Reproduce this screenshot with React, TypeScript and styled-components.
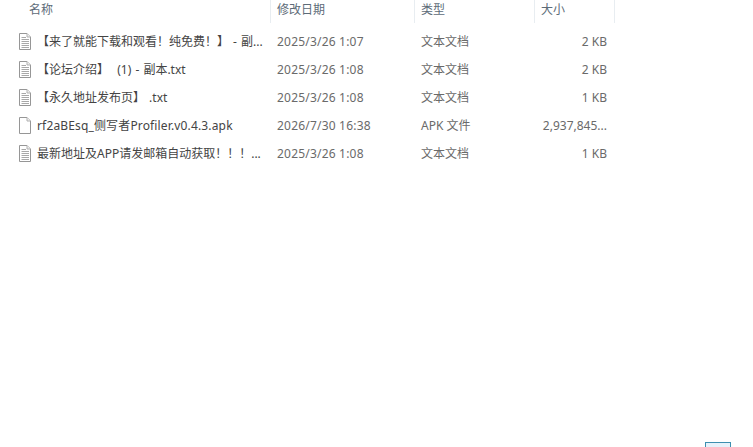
import React from "react";
import styled, { createGlobalStyle } from "styled-components";

const Global = createGlobalStyle`
  html, body { margin: 0; padding: 0; background: #fff; overflow: hidden; }
  body { font-family: "Noto Sans", "Noto Sans CJK SC", sans-serif; }
`;

const Page = styled.div`
  position: relative;
  width: 753px;
  height: 447px;
  overflow: hidden;
  background: #fff;
`;

const Columns = "271px 144px 120px 80px";

const Header = styled.div`
  display: grid;
  grid-template-columns: ${Columns};
  height: 23px;
`;

const HeaderCell = styled.div<{ $first?: boolean }>`
  box-sizing: border-box;
  border-right: 1px solid #e8edf1;
  padding: 0 0 5px ${(p) => (p.$first ? "29px" : "6px")};
  display: flex;
  align-items: center;
  font-size: 12px;
  color: #5d6b78;
`;

const List = styled.div`
  padding-top: 4px;
`;

const Row = styled.div`
  display: grid;
  grid-template-columns: ${Columns};
  height: 28px;
  align-items: center;
  font-size: 12px;
  color: #4c4c4c;
`;

const NameCell = styled.div`
  display: flex;
  align-items: center;
  padding-left: 19px;
  min-width: 0;
`;

const IconWrap = styled.svg`
  flex: none;
  width: 14px;
  height: 17px;
`;

const Name = styled.span<{ $wide?: boolean }>`
  margin-left: 4px;
  width: 226px;
  white-space: nowrap;
  overflow: hidden;
  color: #444;
  word-spacing: 1px;
  letter-spacing: ${(p) => (p.$wide ? "0.15px" : "0")};
`;

const DateCell = styled.div`
  padding-left: 6px;
  white-space: nowrap;
  color: #6a6a6a;
  letter-spacing: 0.2px;
`;

const TypeCell = styled.div`
  padding-left: 6px;
  white-space: nowrap;
  color: #6a6a6a;
`;

const SizeCell = styled.div`
  padding-right: 8px;
  text-align: right;
  white-space: nowrap;
  color: #6a6a6a;
`;

const ViewToggle = styled.div`
  position: absolute;
  left: 705px;
  top: 442px;
  width: 26px;
  height: 10px;
  box-sizing: border-box;
  border: 1px solid #3d8fb0;
  background: #e6f2fb;
`;

const FileIcon = ({ lines }: { lines: boolean }) => (
  <IconWrap viewBox="0 0 14 17" aria-hidden="true">
    <path d="M0.5 0.5H8L11.5 4V16.5H0.5Z" fill="#fff" stroke="#969696" />
    <path d="M8 0.5V4H11.5" fill="#f0f0f0" stroke="#b0b0b0" />
    {lines && (
      <path
        d="M2.5 4.5H7M2.5 6.5H10M2.5 8.5H10M2.5 10.5H10M2.5 12.5H10M2.5 14.5H10"
        stroke="#a8a8a8"
        strokeWidth="1"
      />
    )}
  </IconWrap>
);

const rows = [
  { name: "【来了就能下载和观看！纯免费！】 - 副...", date: "2025/3/26 1:07", type: "文本文档", size: "2 KB", lines: true },
  { name: "【论坛介绍】\u00a0 (1) - 副本.txt", date: "2025/3/26 1:08", type: "文本文档", size: "2 KB", lines: true },
  { name: "【永久地址发布页】 .txt", date: "2025/3/26 1:08", type: "文本文档", size: "1 KB", lines: true },
  { name: "rf2aBEsq_侧写者Profiler.v0.4.3.apk", date: "2026/7/30 16:38", type: "APK 文件", size: "2,937,845...", lines: false, wide: true },
  { name: "最新地址及APP请发邮箱自动获取！！！...", date: "2025/3/26 1:08", type: "文本文档", size: "1 KB", lines: true },
];

export default function App() {
  return (
    <Page>
      <Global />
      <Header>
        <HeaderCell $first>名称</HeaderCell>
        <HeaderCell>修改日期</HeaderCell>
        <HeaderCell>类型</HeaderCell>
        <HeaderCell>大小</HeaderCell>
      </Header>
      <List>
        {rows.map((r) => (
          <Row key={r.name}>
            <NameCell>
              <FileIcon lines={r.lines} />
              <Name $wide={r.wide}>{r.name}</Name>
            </NameCell>
            <DateCell>{r.date}</DateCell>
            <TypeCell>{r.type}</TypeCell>
            <SizeCell>{r.size}</SizeCell>
          </Row>
        ))}
      </List>
      <ViewToggle />
    </Page>
  );
}
